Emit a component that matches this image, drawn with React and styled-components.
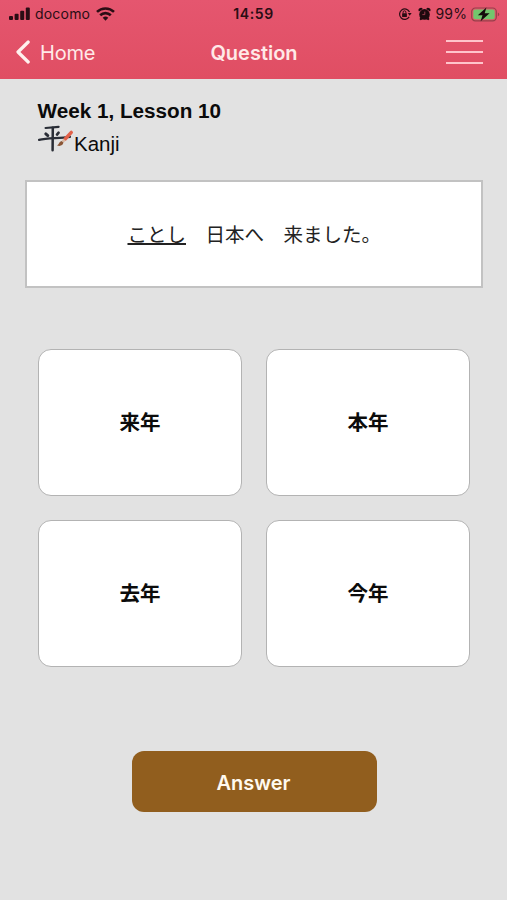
import React from "react";
import styled, { createGlobalStyle } from "styled-components";

const GlobalStyle = createGlobalStyle`
  * { box-sizing: border-box; }
  body { margin: 0; background: #e2e2e2; }
  button { font: inherit; border: 0; padding: 0; margin: 0; background: none; color: inherit; }
`;

const Screen = styled.div`
  width: 507px;
  height: 900px;
  overflow: hidden;
  background: #e2e2e2;
  color: #0b0b0b;
  font-family: "Liberation Sans", "Noto Sans CJK JP", sans-serif;
`;

const Header = styled.header`
  height: 79px;
  background: linear-gradient(#e5566f, #e04e63);
  font-family: Inter, sans-serif;
`;

const StatusBar = styled.div`
  height: 28px;
  padding: 0 7px 0 9px;
  display: grid;
  grid-template-columns: 1fr auto 1fr;
  align-items: center;
  color: #2a0d14;
  font-size: 14px;
  line-height: 28px;
`;

const StatusGroup = styled.div`
  display: flex;
  align-items: center;
  justify-content: ${(p) => (p.$end ? "flex-end" : "flex-start")};
  svg { display: block; flex: none; }
`;

const StatusIcons = styled.div`
  display: flex;
  align-items: center;
  gap: 6px;
`;

const Carrier = styled.span`
  margin: 0 6px 0 5px;
  font-size: 14px;
  letter-spacing: 0.2px;
`;

const Clock = styled.span`
  margin-right: 2px;
  font-weight: 600;
  font-size: 14px;
  letter-spacing: 0.6px;
`;

const Percent = styled.span`
  margin: 0 4px 0 5px;
  font-size: 14px;
  letter-spacing: 0.1px;
`;

const NavBar = styled.nav`
  height: 50px;
  padding: 0 24px 0 15px;
  display: grid;
  grid-template-columns: 1fr auto 1fr;
  align-items: center;
  color: #ffe9e8;
`;

const BackButton = styled.button`
  justify-self: start;
  display: flex;
  align-items: center;
  gap: 8px;
  font-size: 20px;
  line-height: 48px;
  letter-spacing: -0.2px;
`;

const Title = styled.h1`
  margin: 0 0 0 10px;
  font-size: 20px;
  line-height: 48px;
  font-weight: 600;
  letter-spacing: 0;
`;

const MenuButton = styled.button`
  justify-self: end;
  width: 37px;
  height: 24px;
  margin-bottom: 2px;
  display: flex;
  flex-direction: column;
  justify-content: space-between;
`;

const MenuLine = styled.span`
  height: 2px;
  background: #ffc4cb;
`;

const LessonHeading = styled.section`
  height: 101px;
  padding: 20px 37px 0;
`;

const LessonTitle = styled.h2`
  margin: 0 0 0 0.5px;
  font-size: 20.7px;
  line-height: 24px;
  font-weight: 700;
`;

const Category = styled.div`
  display: flex;
  align-items: flex-start;
  font-size: 20.5px;
  line-height: 24px;
  svg { display: block; }
`;

const CategoryName = styled.span`
  margin-top: 9px;
`;

const Sentence = styled.p`
  margin: 0 24.5px 0 25px;
  height: 108px;
  display: flex;
  align-items: center;
  justify-content: center;
  border: 2px solid #c2c2c2;
  background: #fff;
  color: #222;
  font-family: "Noto Sans CJK JP", sans-serif;
  font-size: 19.5px;
  line-height: 28px;
  white-space: pre;
`;

const Target = styled.span`
  margin-left: 1px;
  text-decoration: underline;
  text-decoration-thickness: 1.5px;
  text-underline-offset: 1px;
`;

const Choices = styled.div`
  margin: 61px 37px 0 38px;
  display: grid;
  grid-template-columns: 1fr 1fr;
  grid-auto-rows: 147px;
  gap: 24px;
`;

const Choice = styled.button`
  padding-bottom: 3px;
  border: 1px solid #b3b3b3;
  border-radius: 13px;
  background: #fff;
  color: #0b0b0b;
  font-family: "Noto Sans CJK JP", sans-serif;
  font-size: 20.5px;
  font-weight: 700;
`;

const AnswerButton = styled.button`
  display: block;
  width: 245px;
  height: 61px;
  margin: 84px 0 0 131.5px;
  padding: 2px 1px 0 0;
  border-radius: 12px;
  background: #915e1e;
  color: #fffaf0;
  font-family: Inter, sans-serif;
  font-size: 20px;
  font-weight: 600;
`;

const Signal = () => (
  <svg width="21" height="14" viewBox="0 0 21 14" fill="#2a0d14">
    <rect x="0" y="9" width="4" height="4" rx="1" />
    <rect x="5.6" y="6.8" width="4" height="6.2" rx="1" />
    <rect x="11.2" y="3.8" width="4" height="9.2" rx="1" />
    <rect x="16.8" y="0.5" width="4" height="12.5" rx="1" />
  </svg>
);

const Wifi = () => (
  <svg width="19" height="14" viewBox="0 0 19 14" fill="none" stroke="#2a0d14" strokeWidth="2.6">
    <path d="M1 4.9a12.2 12.2 0 0 1 17 0" />
    <path d="M4.2 8.3a7.6 7.6 0 0 1 10.6 0" />
    <path d="M6.7 10.8a4 4 0 0 1 5.6 0L9.5 13.8z" fill="#2a0d14" stroke="none" />
  </svg>
);

const RotationLock = () => (
  <svg width="14" height="14" viewBox="0 0 14 14" fill="none" stroke="#2a0d14" strokeWidth="1.2">
    <path d="M11.2 9.9A5.2 5.2 0 1 1 11.5 5" />
    <path d="M9.8 6h3.8l-1.9 2.8z" fill="#2a0d14" stroke="none" />
    <rect x="4.1" y="6.3" width="4.8" height="3.8" rx="0.6" fill="#2a0d14" stroke="none" />
    <path d="M5.1 6.5V5.2a1.4 1.4 0 0 1 2.8 0v1.3" strokeWidth="1" />
  </svg>
);

const Alarm = () => (
  <svg width="13" height="14" viewBox="0 0 13 14">
    <g fill="#1d090e">
      <circle cx="6.5" cy="7.4" r="5.3" />
      <path d="M1 4.600a2.200 2.200 0 0 1 3.800-2.700zM12 4.600a2.200 2.200 0 0 0-3.800-2.700z" />
      <path d="M2.200 10.200L4.600 12.300 2.700 13.200 1.600 12.200zM10.800 10.200L8.400 12.300l1.900.900 1.100-1z" />
    </g>
    <path d="M6.8 4.600v3H4.400" fill="none" stroke="#b8455a" strokeWidth="0.8" />
  </svg>
);

const Battery = () => (
  <svg width="29" height="15" viewBox="0 0 29 15">
    <rect x="0.7" y="1" width="24.6" height="12.8" rx="3.6" fill="none" stroke="#96404a" strokeWidth="1.2" />
    <rect x="2.3" y="2.6" width="21.4" height="9.6" rx="2" fill="#72c66d" />
    <path d="M26.8 5.4c2 .8 2 3.1 0 3.9z" fill="#96404a" />
    <path d="M15.4 0.6L6.8 8.3h4.7l-1.9 6 9-8.1h-4.9z" fill="#140b0c" />
  </svg>
);

const ChevronBack = () => (
  <svg width="17" height="26" viewBox="0 0 17 26" fill="none" stroke="#fff1ee" strokeWidth="3.2" strokeLinecap="round" strokeLinejoin="round">
    <path d="M13.2 2L3 12l10.2 10" />
  </svg>
);

/* Calligraphy logo: ink strokes with a red brush resting on them. */
const KanjiBrush = () => (
  <svg width="37" height="32" viewBox="0 0 37 32" role="img" aria-label="Kanji brush" fill="none" strokeLinecap="round">
    <g stroke="#292d36">
      <path d="M8.600 5L21.600 3.900" strokeWidth="2.200" />
      <path d="M15.800 4.800L15.600 27.300" strokeWidth="2.500" />
      <path d="M8.800 10.900L10.800 12.600" strokeWidth="3" />
      <path d="M21.600 9.700L20 11.600" strokeWidth="2.600" />
      <path d="M2 16.800C11 15 22 15.400 33 13.800" strokeWidth="2.200" />
    </g>
    <path d="M34.300 9.400L28.200 16" stroke="#e2614a" strokeWidth="3.400" />
    <path d="M27.600 16.700l-2 2" stroke="#d9b7a2" strokeWidth="2.800" strokeLinecap="butt" />
    <path d="M26.400 19.600c-.4 2.900-3.200 4-6.400 2.900 2-.6 2-3.600 4.400-4.400z" fill="#8b5636" />
  </svg>
);

const choices = ["来年", "本年", "去年", "今年"];

export default function App() {
  return (
    <Screen>
      <GlobalStyle />
      <Header>
        <StatusBar>
          <StatusGroup>
            <Signal />
            <Carrier>docomo</Carrier>
            <Wifi />
          </StatusGroup>
          <Clock>14:59</Clock>
          <StatusGroup $end>
            <StatusIcons>
              <RotationLock />
              <Alarm />
            </StatusIcons>
            <Percent>99%</Percent>
            <Battery />
          </StatusGroup>
        </StatusBar>
        <NavBar>
          <BackButton>
            <ChevronBack />
            Home
          </BackButton>
          <Title>Question</Title>
          <MenuButton aria-label="Menu">
            <MenuLine />
            <MenuLine />
            <MenuLine />
          </MenuButton>
        </NavBar>
      </Header>
      <LessonHeading>
        <LessonTitle>Week 1, Lesson 10</LessonTitle>
        <Category>
          <KanjiBrush />
          <CategoryName>Kanji</CategoryName>
        </Category>
      </LessonHeading>
      <Sentence>
        <Target>ことし</Target>
        {"　日本へ　来ました。"}
      </Sentence>
      <Choices>
        {choices.map((word) => (
          <Choice key={word}>{word}</Choice>
        ))}
      </Choices>
      <AnswerButton>Answer</AnswerButton>
    </Screen>
  );
}
